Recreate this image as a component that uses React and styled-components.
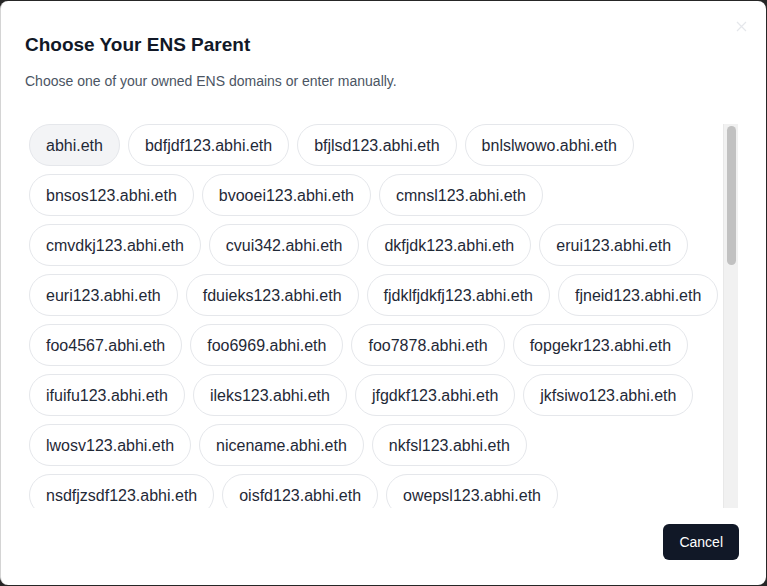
import React, { useState } from "react";
import styled, { createGlobalStyle } from "styled-components";

const GlobalStyle = createGlobalStyle`
  html, body {
    margin: 0;
    padding: 0;
    background: #262626;
    font-family: "Liberation Sans", Arial, sans-serif;
  }
  * { box-sizing: border-box; }
`;

const domains = [
  "abhi.eth",
  "bdfjdf123.abhi.eth",
  "bfjlsd123.abhi.eth",
  "bnlslwowo.abhi.eth",
  "bnsos123.abhi.eth",
  "bvooei123.abhi.eth",
  "cmnsl123.abhi.eth",
  "cmvdkj123.abhi.eth",
  "cvui342.abhi.eth",
  "dkfjdk123.abhi.eth",
  "erui123.abhi.eth",
  "euri123.abhi.eth",
  "fduieks123.abhi.eth",
  "fjdklfjdkfj123.abhi.eth",
  "fjneid123.abhi.eth",
  "foo4567.abhi.eth",
  "foo6969.abhi.eth",
  "foo7878.abhi.eth",
  "fopgekr123.abhi.eth",
  "ifuifu123.abhi.eth",
  "ileks123.abhi.eth",
  "jfgdkf123.abhi.eth",
  "jkfsiwo123.abhi.eth",
  "lwosv123.abhi.eth",
  "nicename.abhi.eth",
  "nkfsl123.abhi.eth",
  "nsdfjzsdf123.abhi.eth",
  "oisfd123.abhi.eth",
  "owepsl123.abhi.eth",
  "pdlskw123.abhi.eth",
  "peoiru123.abhi.eth",
  "pqowie123.abhi.eth",
  "qwerty123.abhi.eth",
  "qpwoei123.abhi.eth",
  "rifjei123.abhi.eth",
  "rkdlsp123.abhi.eth",
  "sdfkjl123.abhi.eth",
  "slwkeo123.abhi.eth",
  "sodkfj123.abhi.eth",
  "test1.abhi.eth",
  "test2.abhi.eth",
  "test123.abhi.eth",
  "tiruek123.abhi.eth",
  "uiosdf123.abhi.eth",
  "urieow123.abhi.eth",
  "vbnmsl123.abhi.eth",
  "vkdlso123.abhi.eth",
  "wieurk123.abhi.eth",
  "woeiru123.abhi.eth",
  "xcvbns123.abhi.eth",
  "xldkfo123.abhi.eth",
  "yeiruw123.abhi.eth",
  "yowpqe123.abhi.eth",
  "zmxncb123.abhi.eth",
  "zqoweir123.abhi.eth",
  "zzz.abhi.eth",
];

function App() {
  const [selected, setSelected] = useState("abhi.eth");

  return (
    <>
      <GlobalStyle />
      <Dialog>
        <CloseButton aria-label="Close">
          <svg width="11" height="11" viewBox="0 0 11 11">
            <path d="M1 1L10 10M10 1L1 10" stroke="currentColor" strokeWidth="1.2" />
          </svg>
        </CloseButton>
        <Header>
          <Title>Choose Your ENS Parent</Title>
          <Description>
            Choose one of your owned ENS domains or enter manually.
          </Description>
        </Header>
        <ScrollBox>
          <ScrollArea>
            <ChipList>
              {domains.map((d) => (
                <Chip
                  key={d}
                  $active={selected === d}
                  onClick={() => setSelected(d)}
                >
                  {d}
                </Chip>
              ))}
            </ChipList>
          </ScrollArea>
          <Track>
            <Thumb />
          </Track>
        </ScrollBox>
        <Footer>
          <CancelButton>Cancel</CancelButton>
        </Footer>
      </Dialog>
    </>
  );
}

const Dialog = styled.div`
  position: relative;
  width: 766px;
  height: 584px;
  margin-top: 1px;
  background: #ffffff;
  border-radius: 8px;
  border-left: 1px solid #d4d4d4;
  padding: 30px 28px 24px 24px;
  display: flex;
  flex-direction: column;
`;

const CloseButton = styled.button`
  position: absolute;
  top: 20px;
  right: 19px;
  border: none;
  background: none;
  padding: 0;
  color: #e5e7eb;
  display: flex;
`;

const Header = styled.div`
  display: flex;
  flex-direction: column;
  gap: 12px;
`;

const Title = styled.h2`
  margin: 0;
  font-size: 19px;
  line-height: 28px;
  font-weight: 700;
  color: #111827;
`;

const Description = styled.p`
  margin: 0;
  font-size: 14px;
  line-height: 20px;
  color: #4b5563;
`;

const ScrollBox = styled.div`
  margin-top: 33px;
  height: 384px;
  display: flex;
`;

const ScrollArea = styled.div`
  flex: 1;
  overflow-y: auto;
  scrollbar-width: none;

  &::-webkit-scrollbar {
    display: none;
  }
`;

const Track = styled.div`
  width: 15px;
  flex-shrink: 0;
  background: #f1f1f1;
  border-left: 1px solid #e8e8e8;
  padding: 2px 2px 0 3px;
`;

const Thumb = styled.div`
  height: 139px;
  border-radius: 5px;
  background: #c1c1c1;
`;

const ChipList = styled.div`
  display: flex;
  flex-wrap: wrap;
  gap: 8px;
  padding: 0 4px 4px 4px;
`;

const Chip = styled.button`
  height: 42px;
  padding: 2px 16px 0;
  border-radius: 999px;
  border: 1px solid #e5e7eb;
  background: ${(p) => (p.$active ? "#f3f4f6" : "#ffffff")};
  color: #1f2937;
  font-family: "Liberation Sans", Arial, sans-serif;
  font-size: 16px;
  cursor: pointer;
`;

const Footer = styled.div`
  margin-top: 16px;
  display: flex;
  justify-content: flex-end;
`;

const CancelButton = styled.button`
  height: 36px;
  padding: 0 16px;
  margin-right: -1px;
  border: none;
  border-radius: 6px;
  background: #111827;
  color: #ffffff;
  font-family: "Liberation Sans", Arial, sans-serif;
  font-size: 14px;
  cursor: pointer;
`;

export default App;
